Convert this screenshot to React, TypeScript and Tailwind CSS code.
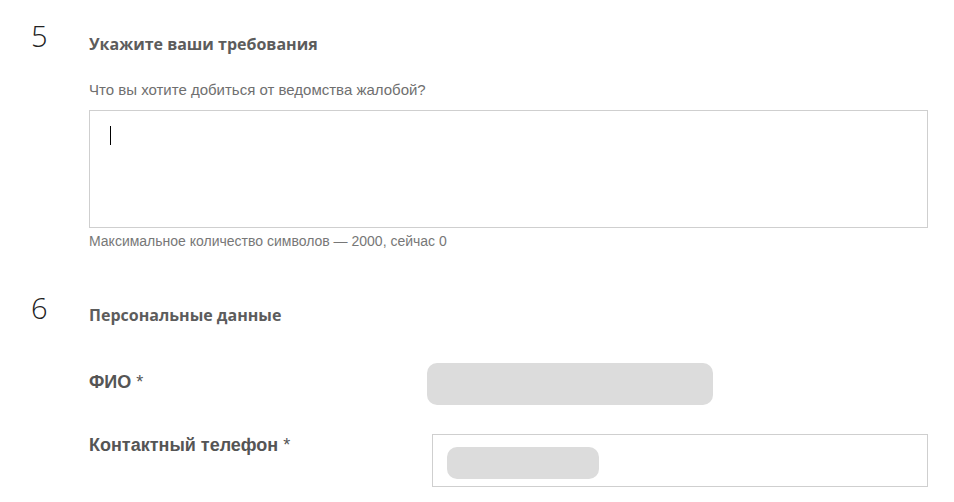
export default function App() {
    return (
        <div className="min-h-screen bg-white pl-[31px] pr-[26px] pt-[21px] text-[#666]">
            <section className="flex">
                <div className="w-[58px] shrink-0 text-[29px] leading-[29px] font-light text-[#222] [font-family:'Open_Sans',sans-serif]">5</div>
                <div className="flex-1">
                    <h2 className="mt-[13px] text-[16px] leading-[20px] font-bold text-[#5c5c5c] [font-family:'Open_Sans',sans-serif]">
                        Укажите ваши требования
                    </h2>
                    <p className="mt-[27px] text-[15px] leading-[18px] text-[#6f6f6f] [font-family:'Liberation_Sans',sans-serif]">
                        Что вы хотите добиться от ведомства жалобой?
                    </p>
                    <div className="mt-[11px] h-[118px] border border-[#cfcfcf] pl-[20px] pt-[15px]">
                        <div className="h-[19px] w-px bg-black" />
                    </div>
                    <p className="mt-[5px] text-[14px] leading-[16px] text-[#777] [font-family:'Liberation_Sans',sans-serif]">
                        Максимальное количество символов — 2000, сейчас 0
                    </p>
                </div>
            </section>
            <section className="mt-[44px] flex">
                <div className="w-[58px] shrink-0 text-[29px] leading-[29px] font-light text-[#222] [font-family:'Open_Sans',sans-serif]">6</div>
                <div className="flex-1">
                    <h2 className="mt-[12px] text-[16px] leading-[20px] font-bold text-[#5c5c5c] [font-family:'Open_Sans',sans-serif]">
                        Персональные данные
                    </h2>
                    <div className="mt-[38px] flex items-start">
                        <label className="mt-[9px] w-[338px] shrink-0 text-[18px] leading-[20px] font-bold text-[#555] [font-family:'Liberation_Sans',sans-serif]">
                            ФИО <span className="font-normal">*</span>
                        </label>
                        <div className="h-[42px] w-[286px] rounded-[10px] bg-[#dcdcdc]" />
                    </div>
                    <div className="mt-[29px] flex items-start">
                        <label className="mt-[1px] w-[343px] shrink-0 text-[18px] leading-[20px] font-bold text-[#555] [font-family:'Liberation_Sans',sans-serif]">
                            Контактный телефон <span className="font-normal">*</span>
                        </label>
                        <div className="h-[53px] flex-1 border border-[#cfcfcf] pl-[14px] pt-[12px]">
                            <div className="h-[32px] w-[152px] rounded-[10px] bg-[#dcdcdc]" />
                        </div>
                    </div>
                </div>
            </section>
        </div>
    );
}
